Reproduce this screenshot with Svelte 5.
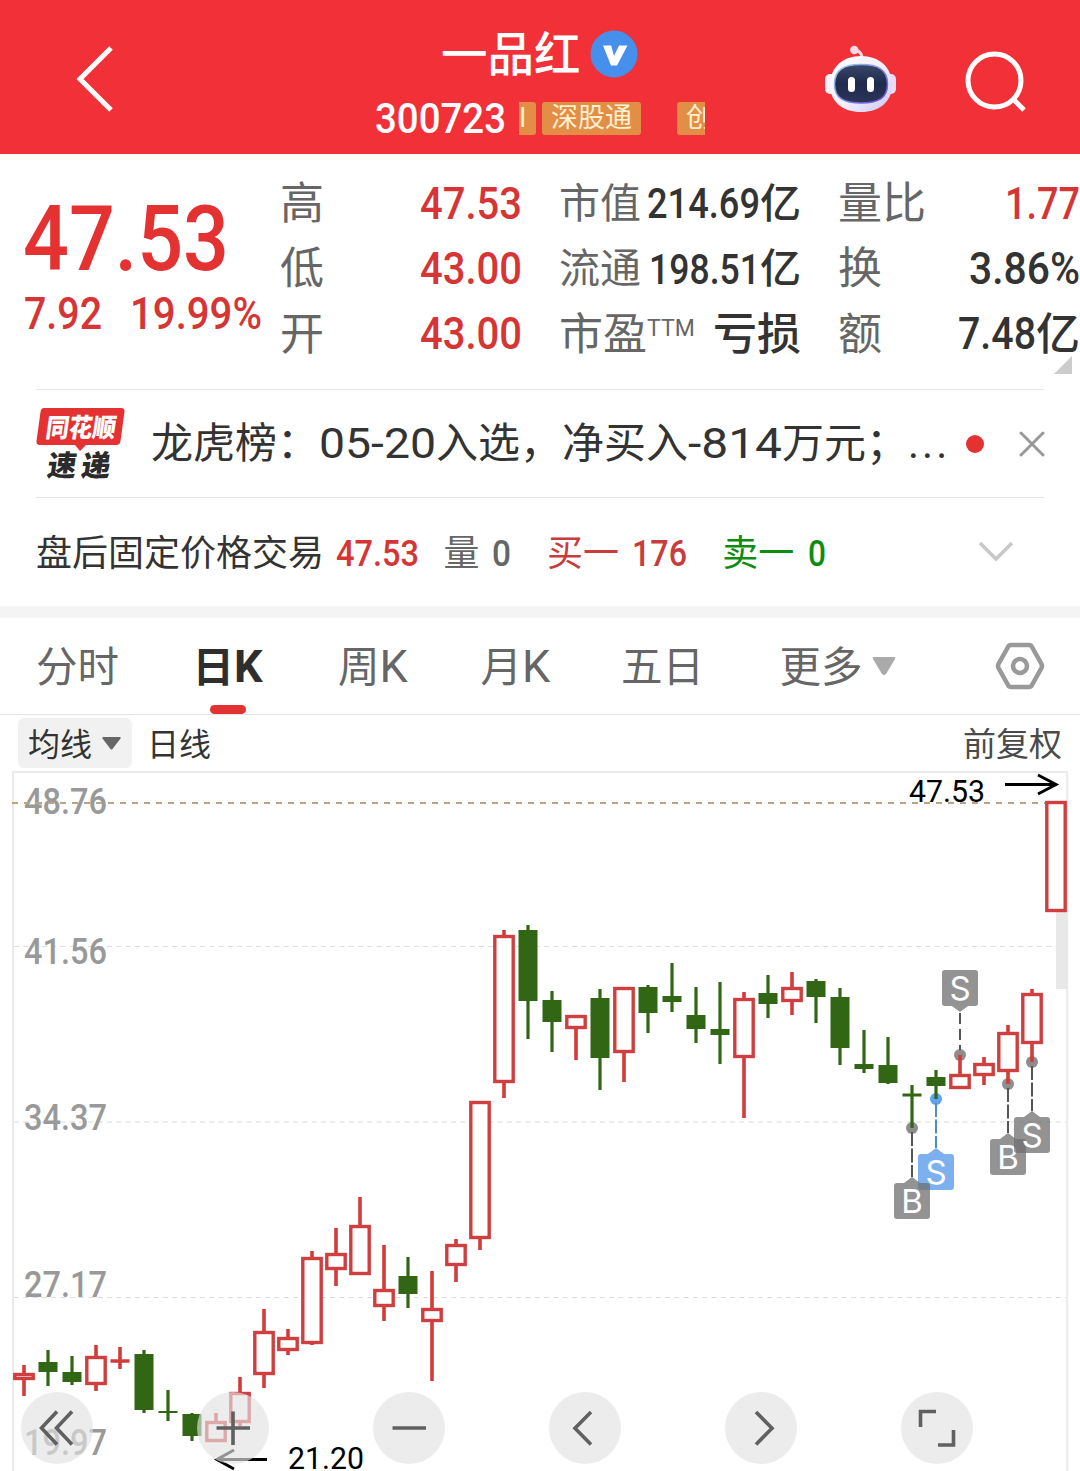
<script>
  const stats = [
    [
      { label: '高', num: '47.53', width: 102, red: true },
      { label: '低', num: '43.00', width: 102, red: true },
      { label: '开', num: '43.00', width: 102, red: true },
    ],
    [
      { label: '市值', num: '214.69', width: 113, unit: '亿', small: true },
      { label: '流通', num: '198.51', width: 111, unit: '亿', small: true },
      { label: '市盈', sup: 'TTM', unit: '亏损' },
    ],
    [
      { label: '量比', num: '1.77', width: 75, red: true },
      { label: '换', num: '3.86%', width: 111 },
      { label: '额', num: '7.48', width: 78, unit: '亿' },
    ],
  ];

  const tabs = [
    { name: '分时', width: 85 },
    { name: '日', letter: 'K', width: 74 },
    { name: '周', letter: 'K', width: 71 },
    { name: '月', letter: 'K', width: 69 },
    { name: '五日', width: 87 },
  ];
  let activeTab = 1;

  // [high, body top, body bottom, low, up]
  const candles = [
    [1365, 1373, 1380, 1396, 1],
    [1350, 1362, 1372, 1386, 0],
    [1356, 1372, 1382, 1385, 0],
    [1345, 1356, 1385, 1391, 1],
    [1347, 1359, 1363, 1369, 1],
    [1350, 1354, 1410, 1413, 0],
    [1390, 1411, 1413, 1421, 0],
    [1413, 1414, 1436, 1441, 0],
    [1413, 1421, 1442, 1442, 1],
    [1377, 1392, 1423, 1426, 1],
    [1309, 1331, 1375, 1388, 1],
    [1329, 1337, 1351, 1355, 1],
    [1251, 1257, 1344, 1345, 1],
    [1228, 1253, 1270, 1286, 1],
    [1197, 1225, 1275, 1275, 1],
    [1245, 1289, 1307, 1321, 1],
    [1257, 1276, 1294, 1308, 0],
    [1271, 1308, 1322, 1381, 1],
    [1239, 1244, 1266, 1282, 1],
    [1101, 1101, 1239, 1250, 1],
    [930, 935, 1083, 1098, 1],
    [925, 930, 1001, 1039, 0],
    [991, 1000, 1022, 1052, 0],
    [1015, 1015, 1029, 1060, 1],
    [989, 998, 1058, 1090, 0],
    [987, 987, 1053, 1082, 1],
    [985, 987, 1013, 1033, 0],
    [963, 996, 1002, 1012, 0],
    [987, 1015, 1029, 1043, 0],
    [982, 1029, 1035, 1064, 0],
    [992, 998, 1058, 1118, 1],
    [975, 993, 1004, 1018, 0],
    [972, 987, 1002, 1015, 1],
    [979, 981, 997, 1023, 0],
    [988, 997, 1048, 1065, 0],
    [1030, 1064, 1069, 1073, 0],
    [1037, 1065, 1083, 1084, 0],
    [1085, 1093.5, 1096.5, 1128, 0],
    [1070, 1077, 1086, 1099, 0],
    [1055, 1074, 1089, 1089, 1],
    [1057, 1063, 1076, 1085, 1],
    [1025, 1032, 1072, 1084, 1],
    [989, 993, 1044, 1062, 1],
    [801, 801, 912, 912, 1],
  ].map(([high, top, bottom, low, up], i) => ({ x: 24 + i * 24, high, top, bottom, low, up }));

  const axis = [
    { text: '48.76', y: 814 },
    { text: '41.56', y: 964 },
    { text: '34.37', y: 1130 },
    { text: '27.17', y: 1297 },
    { text: '19.97', y: 1455 },
  ];

  // buy / sell marks, dot is the y of the point on the candle
  const marks = [
    { x: 936, dot: 1099, text: 'S', blue: true },
    { x: 912, dot: 1128, text: 'B' },
    { x: 960, dot: 1055, text: 'S', above: true },
    { x: 1008, dot: 1084, text: 'B' },
    { x: 1032, dot: 1062, text: 'S' },
  ];

  const tools = [
    'M36 19.5 20.5 36 36 52.5M51 19.5 35.5 36 51 52.5',
    'M19.5 36h33.5M36 19.5v33.5',
    'M19.5 36h33.5',
    'M42 20 26 36.3 42 52.5',
    'M31 20 47 36.3 31 52.5',
    'M35 19.5H19.5V35M37 53H52.5V38',
  ];
</script>

<!-- condensed digits: the box is as high as the digits and stands on the baseline -->
{#snippet num(text, width, size, weight = 500)}
  <svg class="num" {width} height={size * 0.711}>
    <text x="0" y={size * 0.711} font-size={size} font-weight={weight} textLength={width} lengthAdjust="spacingAndGlyphs">{text}</text>
  </svg>
{/snippet}

<div class="page">
  <header>
    <svg class="back" width="40" height="70" viewBox="0 0 40 70">
      <path d="M36 4 5 35 36 66" fill="none" stroke="#fff" stroke-width="5" />
    </svg>
    <div class="stock">
      <div class="name">
        <span>一品红</span>
        <svg width="48" height="48" viewBox="0 0 48 48">
          <circle cx="24" cy="24" r="23.5" fill="#468fec" />
          <path d="M13 15.500h8.200l2.800 10.500 5-10.500h8.500L27 35.500h-6z" fill="#fff" />
        </svg>
      </div>
      <div class="code">
        {@render num('300723', 131, 43)}
        <div class="tags">
          <span class="tag prev">I</span>
          <span class="tag">深股通</span>
          <span class="tag next">创</span>
        </div>
      </div>
    </div>
    <svg class="robot" width="74" height="68" viewBox="0 0 74 68">
      <defs>
        <linearGradient id="shell" x1="0" y1="0" x2="1" y2="1">
          <stop offset="0" stop-color="#fff" />
          <stop offset=".55" stop-color="#f3effb" />
          <stop offset="1" stop-color="#c9c5f4" />
        </linearGradient>
        <linearGradient id="rim" x1="0" y1="0" x2="1" y2="1">
          <stop offset="0" stop-color="#9bd3ee" />
          <stop offset="1" stop-color="#6a45e0" />
        </linearGradient>
        <linearGradient id="visor" x1="0" y1="0" x2="0" y2="1">
          <stop offset="0" stop-color="#3b4766" />
          <stop offset=".5" stop-color="#1f2a4d" />
          <stop offset="1" stop-color="#2d3558" />
        </linearGradient>
      </defs>
      <path d="M30 6q7-1 8 6" fill="none" stroke="#f7d7e2" stroke-width="3" />
      <circle cx="30.300" cy="5" r="4.200" fill="#f9dbe6" />
      <rect x="1" y="29" width="12" height="20" rx="5" fill="#faf0f8" />
      <rect x="60" y="29" width="12" height="20" rx="5" fill="#e6dcf6" />
      <path d="M37 11c18 0 31 11 31 29 0 17-13 27-31 27S6 57 6 40c0-18 13-29 31-29z" fill="url(#shell)" />
      <path d="M37 19.500c17 0 26.500 5 26.500 19.500S54 58 37 58 10.500 53.500 10.500 39 20 19.500 37 19.500z" fill="url(#visor)" stroke="url(#rim)" stroke-width="1.500" />
      <rect x="24" y="32" width="7" height="15" rx="3.500" fill="#fff" />
      <rect x="43" y="32" width="7" height="15" rx="3.500" fill="#fff" />
    </svg>
    <svg class="search" width="62" height="62" viewBox="0 0 62 62">
      <circle cx="29.500" cy="29.500" r="26.500" fill="none" stroke="#fff" stroke-width="5" />
      <path d="M48.500 48.500 59 59" stroke="#fff" stroke-width="5" />
    </svg>
  </header>

  <section class="quote">
    <div class="price">
      {@render num('47.53', 206, 90)}
      <div class="change">
        {@render num('7.92', 78, 44)}
        {@render num('19.99%', 132, 44)}
      </div>
    </div>
    {#each stats as column}
      <dl>
        {#each column as item}
          <div class="stat" class:small={item.small}>
            <dt>{item.label}{#if item.sup}<sup>{item.sup}</sup>{/if}</dt>
            <dd class:red={item.red}>{#if item.num}{@render num(item.num, item.width, item.small ? 42 : 44)}{/if}{item.unit ?? ''}</dd>
          </div>
        {/each}
      </dl>
    {/each}
    <svg class="corner" width="18" height="18"><path d="M18 0v18H0z" fill="#ccc" /></svg>
  </section>

  <section class="notice">
    <svg width="90" height="74" viewBox="0 0 90 74">
      <path d="M8 1h77q4 0 3.500 4l-4 29q-.5 4-4.500 4H50l-6 6-5-6H4q-4 0-3.500-4L4.500 5Q5 1 8 1z" fill="#e43131" />
      <g transform="skewX(-8)" font-weight="900">
        <text x="13" y="30" font-size="26" textLength="70" lengthAdjust="spacingAndGlyphs" fill="#fff">同花顺</text>
        <text x="20 54" y="69" font-size="29" fill="#2b2b2b">速递</text>
      </g>
    </svg>
    <p>龙虎榜：{@render num('05-20', 117, 43, 400)}入选，净买入{@render num('-814', 94, 43, 400)}万元；<span class="dots">...</span></p>
    <i></i>
    <svg width="26" height="26" viewBox="0 0 26 26">
      <path d="M2 2 24 24M24 2 2 24" stroke="#999" stroke-width="3" stroke-linecap="round" />
    </svg>
  </section>

  <section class="after">
    <div>盘后固定价格交易 <b class="red">{@render num('47.53', 83, 36)}</b></div>
    <div class="vol">量 <b>{@render num('0', 19, 36)}</b></div>
    <div class="bid">买一 <b class="shift">{@render num('176', 55, 36)}</b></div>
    <div class="ask">卖一 <b class="shift">{@render num('0', 18, 36)}</b></div>
    <svg width="36" height="22" viewBox="0 0 36 22">
      <path d="M2 2 18 18 34 2" fill="none" stroke="#c8c8c8" stroke-width="3.500" />
    </svg>
  </section>

  <nav>
    {#each tabs as tab, i}
      <button class:active={i === activeTab} style="width: {tab.width}px" on:click={() => (activeTab = i)}>{tab.name}{#if tab.letter}<span>{tab.letter}</span>{/if}</button>
    {/each}
    <button class="more">更多
      <svg width="24" height="20" viewBox="0 0 24 20"><path d="M2 1h20q2 0 1 2L14 18q-2 2-4 0L1 3Q0 1 2 1z" fill="#aaa" /></svg>
    </button>
    <svg class="settings" width="50" height="48" viewBox="0 0 50 48">
      <path d="M16 3h18q2 0 3 2l9 16q2 3 0 6l-9 16q-1 2-3 2H16q-2 0-3-2L4 27q-2-3 0-6L13 5q1-2 3-2z" fill="none" stroke="#999" stroke-width="4.500" />
      <circle cx="25" cy="24" r="7" fill="none" stroke="#999" stroke-width="4.500" />
    </svg>
  </nav>

  <div class="options">
    <div class="pill">
      <span>均线</span>
      <svg width="19" height="13" viewBox="0 0 19 13"><path d="M1 0h17q1 0 .5 1.500L10.500 12q-1 1-2 0L.5 1.500Q0 0 1 0z" fill="#666" /></svg>
    </div>
    <span>日线</span>
    <span class="adjust">前复权</span>
  </div>

  <div class="chart">
    <svg width="1080" height="700" viewBox="0 771 1080 700">
      <path d="M13 1471V772H1067.200V1471" fill="none" stroke="#ebebeb" stroke-width="2" />
      <g stroke="#dcdcdc" stroke-dasharray="5 4.300">
        <path d="M14 946.500H1066M14 1297.500H1066" />
        <path d="M14 1122H1066" stroke="#ececec" stroke-width="2" />
      </g>
      <rect x="1056" y="912" width="11.500" height="77" fill="#e8e8e8" />

      {#each axis as label}
        <text class="axis" x="24" y={label.y} textLength="83" lengthAdjust="spacingAndGlyphs">{label.text}</text>
      {/each}
      <path d="M12 803H1046" stroke="#b9a583" stroke-width="2" stroke-dasharray="6 6" />

      {#each marks as m}
        <circle cx={m.x} cy={m.dot} r="6" fill={m.blue ? '#60a3ee' : '#8d8d8d'} />
      {/each}

      {#each candles as c}
        {#if c.up}
          <path d="M{c.x} {c.high}V{c.top}M{c.x} {c.bottom}V{c.low}" stroke="#d43a3a" stroke-width="3.600" />
          {#if c.bottom - c.top < 5}
            <path d="M{c.x - 9.5} {c.top + 2}h19M{c.x} {c.top}V{c.bottom}" stroke="#d43a3a" stroke-width="3.500" />
          {:else}
            <rect x={c.x - 9.2} y={c.top + 1.5} width="18.400" height={c.bottom - c.top - 3} fill="#fff" stroke="#cf3f3f" stroke-width="3.400" />
          {/if}
        {:else}
          <path d="M{c.x} {c.high}V{c.low}" stroke="#306614" stroke-width="3.200" />
          <rect x={c.x - 9.5} y={c.top} width="19" height={c.bottom - c.top} fill="#306614" />
        {/if}
      {/each}

      {#each marks as m}
        <g class="mark" fill={m.blue ? 'rgba(82,150,234,.75)' : 'rgba(111,111,111,.75)'}>
          {#if m.above}
            <path d="M{m.x} {m.dot - 42}V{m.dot - 5}" stroke="#555" stroke-width="2" stroke-dasharray="11 5" />
            <path d="M{m.x - 15} {m.dot - 85}h30q3 0 3 3v30q0 3-3 3h-7l-8 6-8-6h-7q-3 0-3-3v-30q0-3 3-3z" />
            <text x={m.x} y={m.dot - 55.5}>{m.text}</text>
          {:else}
            <path d="M{m.x} {m.dot + 4}V{m.dot + 49}" stroke={m.blue ? '#4d8cc8' : '#555'} stroke-width="2" stroke-dasharray="14 2.500" />
            <path d="M{m.x - 15} {m.dot + 55}h7l8-6 8 6h7q3 0 3 3v30q0 3-3 3h-30q-3 0-3-3v-30q0-3 3-3z" />
            <text x={m.x} y={m.dot + 84.5}>{m.text}</text>
          {/if}
        </g>
      {/each}

      <g fill="none" stroke="#000" stroke-width="3">
        <path d="M1005 784.500H1056M1038 775 1056 784.500 1038 794" />
        <path d="M267 1459.500H217M234 1450 217 1459.500 234 1469" />
      </g>
      <text class="peak" x="909" y="802" textLength="76" lengthAdjust="spacingAndGlyphs">47.53</text>
      <text class="peak" x="288" y="1469" textLength="76" lengthAdjust="spacingAndGlyphs">21.20</text>
    </svg>

    <div class="tools">
      {#each tools as d}
        <button aria-label="chart tool">
          <svg width="72" height="72" viewBox="0 0 72 72"><path {d} fill="none" stroke="#606060" stroke-width="3.600" /></svg>
        </button>
      {/each}
    </div>
  </div>
</div>

<style>
  :global(body) {
    margin: 0;
    background: #fff;
  }

  .page {
    width: 1080px;
    height: 1471px;
    overflow: hidden;
    background: #fff;
    color: #333;
    font-family: Roboto, 'Noto Sans CJK SC', sans-serif;
  }

  svg {
    display: block;
    flex: none;
  }

  button {
    padding: 0;
    border: 0;
    background: none;
    font: inherit;
    color: inherit;
  }

  .num {
    display: inline-block;
    overflow: visible;
    fill: currentColor;
    vertical-align: baseline;
  }

  .red {
    color: #d63535;
  }

  header {
    display: flex;
    height: 154px;
    background: #f23038;
    color: #fff;
  }

  .back {
    margin: 44px 0 0 75px;
  }

  .stock {
    width: 332px;
    margin: 29px 0 0 260px;
  }

  .name {
    display: flex;
    align-items: center;
    gap: 9px;
    height: 50px;
    padding-left: 66px;
    font-size: 46.500px;
    line-height: 50px;
    font-weight: 500;
  }

  .name span {
    margin-top: 1px;
  }

  .code {
    display: flex;
    align-items: center;
    gap: 13px;
    height: 78px;
  }

  .code > :global(.num) {
    margin-top: -2px;
  }

  .tags {
    display: flex;
    width: 186px;
    overflow: hidden;
    font-size: 27px;
    line-height: 33px;
  }

  .tag {
    flex: none;
    box-sizing: border-box;
    width: 99px;
    border-radius: 3px;
    background: #e38e47;
    color: #fff0cf;
    text-align: center;
  }

  .tag.prev {
    width: 17px;
    margin-right: 6px;
    padding-right: 12px;
    border-radius: 0 3px 3px 0;
  }

  .tag.next {
    margin-left: 36px;
    padding-left: 9px;
    text-align: left;
  }

  .robot {
    margin: 45px 0 0 117px;
  }

  .search {
    margin: 51px 0 0 67px;
  }

  .quote {
    position: relative;
    display: flex;
    gap: 37px;
    box-sizing: border-box;
    height: 235px;
    padding-top: 18px;
  }

  .price {
    box-sizing: border-box;
    width: 280px;
    margin-right: -37px;
    padding: 34px 0 0 23px;
    color: #e43131;
  }

  .price > :global(.num) {
    display: block;
  }

  .change {
    display: flex;
    gap: 28px;
    margin: 28px 0 0 1px;
    color: #d63535;
  }

  dl,
  dd,
  p {
    margin: 0;
  }

  dl {
    width: 242px;
  }

  .stat {
    display: flex;
    justify-content: space-between;
    align-items: center;
    height: 65.300px;
    font-size: 44px;
    line-height: 65px;
    white-space: nowrap;
  }

  .stat.small {
    font-size: 41px;
  }

  dt {
    color: #666;
  }

  dt sup {
    font-size: 23px;
    line-height: 0;
    vertical-align: 14px;
  }

  dd {
    font-weight: 500;
  }

  .corner {
    position: absolute;
    left: 1054px;
    top: 202px;
  }

  .notice {
    display: flex;
    align-items: center;
    height: 107px;
    margin: 0 36px;
    border-top: 1px solid #e8e8e8;
    border-bottom: 1px solid #e8e8e8;
  }

  .notice p {
    flex: none;
    width: 796px;
    margin-left: 25px;
    font-size: 42px;
    line-height: 60px;
    white-space: nowrap;
  }

  .dots {
    letter-spacing: 3px;
  }

  .notice i {
    flex: none;
    width: 18px;
    height: 18px;
    margin: 0 36px 0 19px;
    border-radius: 50%;
    background: #e43131;
  }

  .notice svg:last-child {
    margin-left: -1px;
  }

  .after {
    display: flex;
    align-items: center;
    height: 108px;
    padding: 0 66px 0 36px;
    border-bottom: 12px solid #f4f4f4;
    font-size: 36px;
    line-height: 50px;
  }

  .after div {
    margin-top: 3px;
    word-spacing: 3.500px;
  }

  .shift {
    margin-left: 1px;
  }

  .after .vol {
    margin-left: 24px;
    color: #666;
  }

  .after .bid {
    margin-left: 36px;
    color: #c93c3c;
  }

  .after .ask {
    margin-left: 35px;
    color: #0d8c12;
  }

  .after > svg {
    margin-left: auto;
  }

  nav {
    display: flex;
    align-items: center;
    gap: 71.500px;
    height: 96px;
    padding: 0 35px 0 36px;
    border-bottom: 1px solid #e4e4e4;
    color: #666;
    font-size: 41.500px;
  }

  nav button {
    position: relative;
    height: 96px;
    padding-bottom: 5px;
    text-align: left;
    white-space: nowrap;
  }

  nav button span {
    font-size: 45px;
  }

  nav .active {
    color: #2e2e2e;
    font-weight: 700;
  }

  nav .active::after {
    content: '';
    position: absolute;
    left: 17.500px;
    bottom: 0;
    width: 36px;
    height: 9px;
    border-radius: 5px;
    background: #e23232;
  }

  nav .more {
    display: flex;
    align-items: center;
    gap: 9px;
  }

  .more svg {
    margin-top: 4px;
  }

  .settings {
    margin-left: auto;
  }

  .options {
    display: flex;
    align-items: center;
    gap: 15px;
    height: 56px;
    padding: 0 18px;
    font-size: 32px;
    line-height: 46px;
  }

  .options span {
    padding-top: 4px;
  }

  .pill {
    display: flex;
    align-items: center;
    gap: 10px;
    box-sizing: border-box;
    width: 114px;
    height: 50px;
    padding-left: 10px;
    border-radius: 6px;
    background: #f1f1f1;
  }

  .adjust {
    margin-left: auto;
    color: #4a4a4a;
    font-size: 33px;
  }

  .chart {
    position: relative;
    height: 700px;
  }

  .axis {
    fill: #999;
    font-size: 36px;
    font-weight: 500;
  }

  .peak {
    fill: #000;
    font-size: 31.500px;
  }

  .mark text {
    fill: #fff;
    font-family: Inter, sans-serif;
    font-size: 33px;
    text-anchor: middle;
  }

  .tools {
    position: absolute;
    left: 21px;
    top: 621px;
    display: flex;
    gap: 104px;
  }

  .tools button {
    width: 72px;
    height: 72px;
    border-radius: 50%;
    background: rgba(226, 226, 226, 0.65);
  }
</style>
